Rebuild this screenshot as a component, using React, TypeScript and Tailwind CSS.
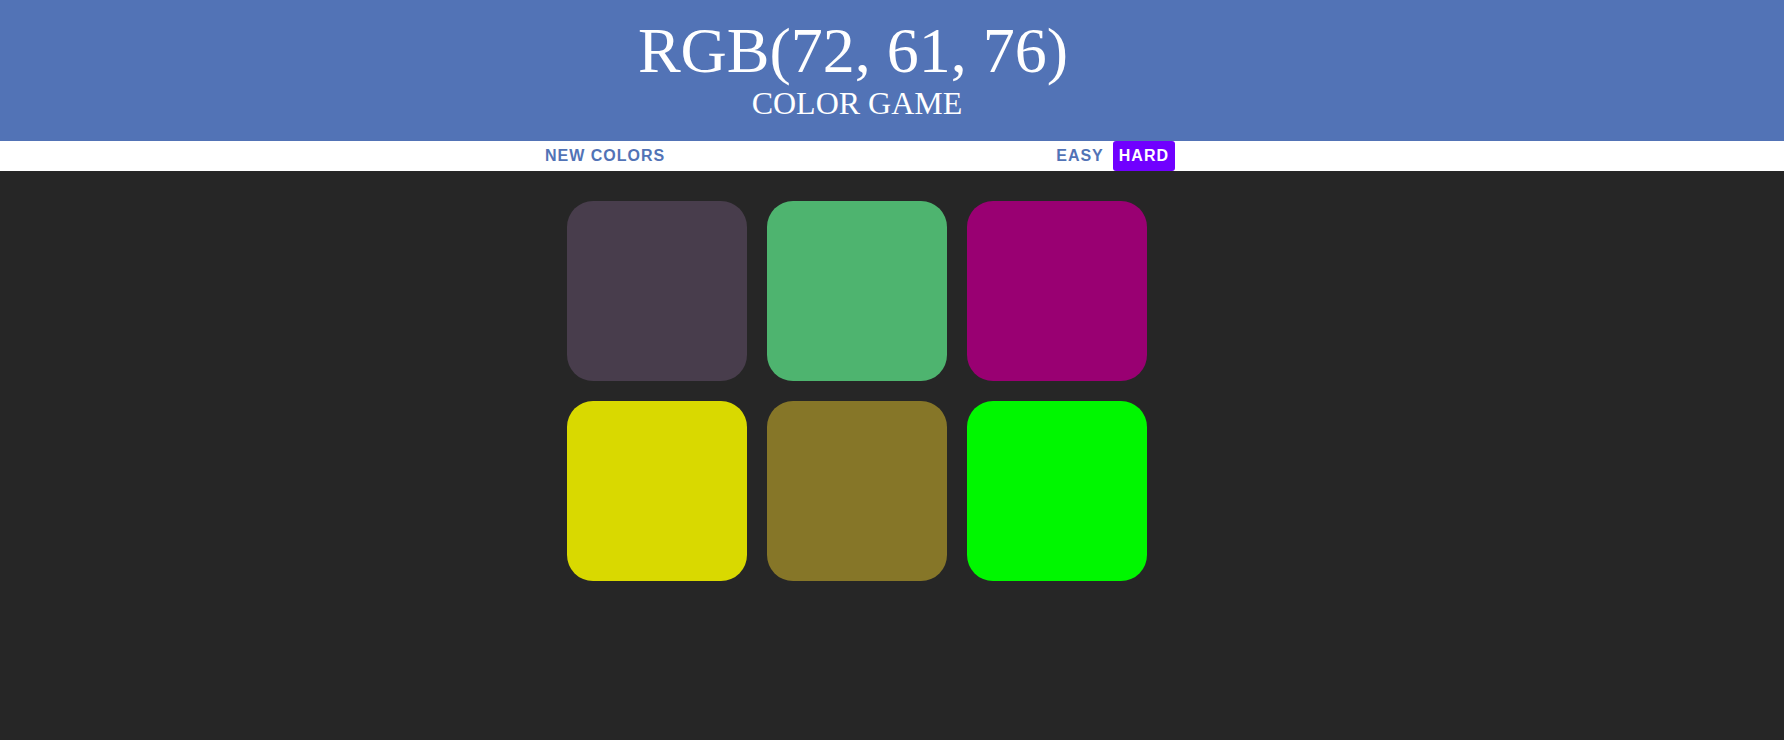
import React from "react";

const squares = [
  "rgb(72, 61, 76)",
  "rgb(78, 180, 111)",
  "rgb(153, 0, 114)",
  "rgb(217, 217, 0)",
  "rgb(134, 118, 40)",
  "rgb(0, 247, 0)",
];

export default function App() {
  return (
    <div className="min-h-[740px] bg-[#262626] font-['Liberation_Sans',Arial,sans-serif]">
      <header className="h-[141px] bg-[#5273b6] text-white font-['Liberation_Serif','Times_New_Roman',serif]">
        <div className="pr-[70px] pt-[19px] text-center">
          <h1 className="pr-[8px] text-[64px] leading-[64px]">RGB(72, 61, 76)</h1>
          <div className="mt-[4px] text-[32px] leading-[32px]">COLOR GAME</div>
        </div>
      </header>

      <nav className="h-[30px] bg-white pr-[70px]">
        <div className="mx-auto flex w-[636px] justify-between text-[16px] font-bold leading-[30px] tracking-[1px]">
          <button className="px-[6px] text-[#5273b6]">NEW COLORS</button>
          <div className="flex gap-[3px]">
            <button className="px-[6px] text-[#5273b6]">EASY</button>
            <button className="rounded-[3px] bg-[#7000ff] px-[6px] text-white">HARD</button>
          </div>
        </div>
      </nav>

      <main className="pr-[70px] pt-[30px]">
        <div className="mx-auto grid w-[580px] grid-cols-3 gap-[20px]">
          {squares.map((c) => (
            <div
              key={c}
              className="h-[180px] w-[180px] rounded-[26px]"
              style={{ backgroundColor: c }}
            />
          ))}
        </div>
      </main>
    </div>
  );
}
